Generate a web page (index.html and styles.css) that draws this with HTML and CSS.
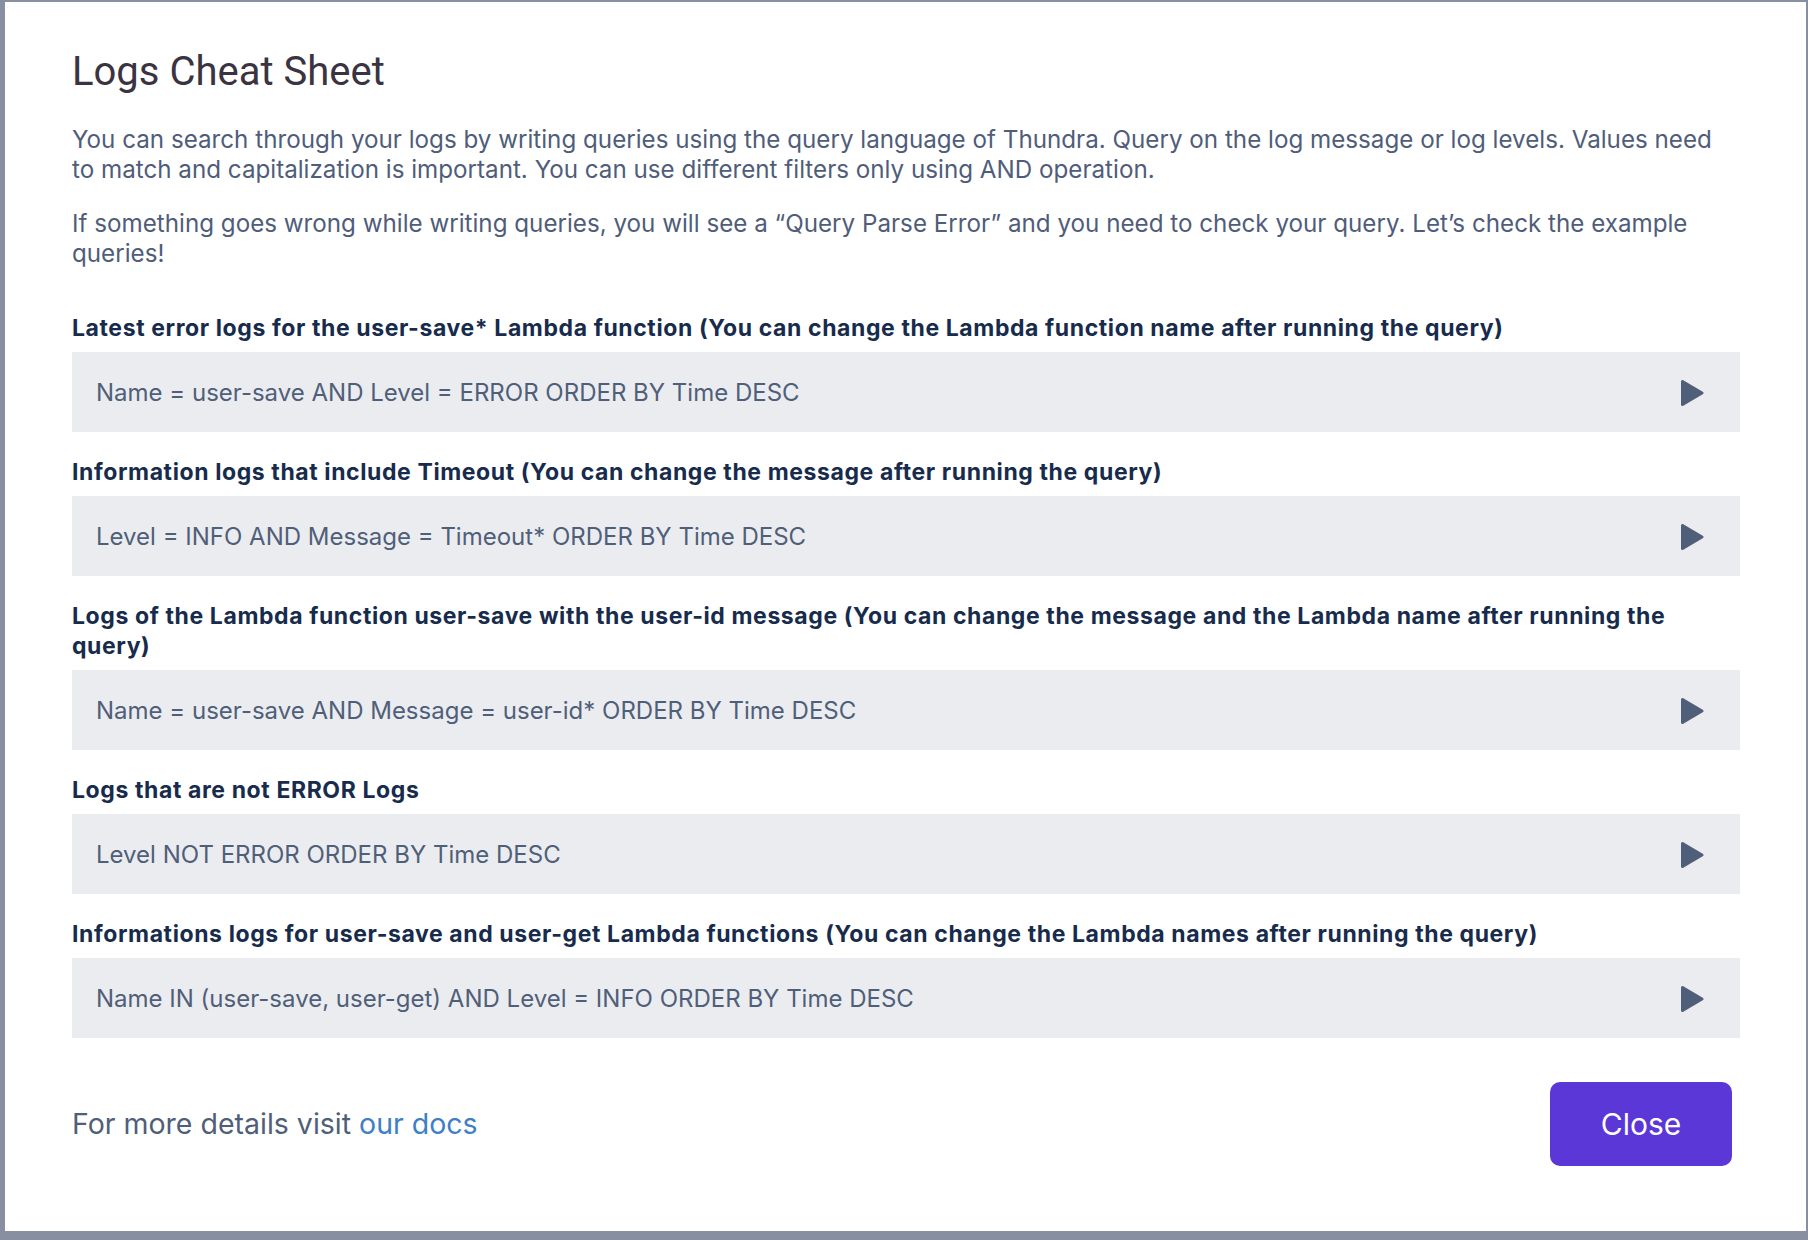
FILE: index.html
```html
<!DOCTYPE html>
<html lang="en">
<head>
<meta charset="utf-8">
<title>Logs Cheat Sheet</title>
<link rel="stylesheet" href="styles.css">
</head>
<body>
<div class="modal">
  <h1 class="title">Logs Cheat Sheet</h1>
  <div class="intro">
    <p>You can search through your logs by writing queries using the query language of Thundra. Query on the log message or log levels. Values need to match and capitalization is important. You can use different filters only using AND operation.</p>
    <p>If something goes wrong while writing queries, you will see a “Query Parse Error” and you need to check your query. Let’s check the example queries!</p>
  </div>
  <div class="items">
    <div class="item">
      <div class="label">Latest error logs for the user-save* Lambda function (You can change the Lambda function name after running the query)</div>
      <div class="query"><span class="qtext">Name = user-save AND Level = ERROR ORDER BY Time DESC</span><svg class="play" width="24" height="28" viewBox="0 0 24 28"><polygon points="2.5,2.5 2.5,25.5 22,14" fill="#505f79" stroke="#505f79" stroke-width="3" stroke-linejoin="round"/></svg></div>
    </div>
    <div class="item">
      <div class="label">Information logs that include Timeout (You can change the message after running the query)</div>
      <div class="query"><span class="qtext">Level = INFO AND Message = Timeout* ORDER BY Time DESC</span><svg class="play" width="24" height="28" viewBox="0 0 24 28"><polygon points="2.5,2.5 2.5,25.5 22,14" fill="#505f79" stroke="#505f79" stroke-width="3" stroke-linejoin="round"/></svg></div>
    </div>
    <div class="item">
      <div class="label">Logs of the Lambda function user-save with the user-id message (You can change the message and the Lambda name after running the query)</div>
      <div class="query"><span class="qtext">Name = user-save AND Message = user-id* ORDER BY Time DESC</span><svg class="play" width="24" height="28" viewBox="0 0 24 28"><polygon points="2.5,2.5 2.5,25.5 22,14" fill="#505f79" stroke="#505f79" stroke-width="3" stroke-linejoin="round"/></svg></div>
    </div>
    <div class="item">
      <div class="label">Logs that are not ERROR Logs</div>
      <div class="query"><span class="qtext">Level NOT ERROR ORDER BY Time DESC</span><svg class="play" width="24" height="28" viewBox="0 0 24 28"><polygon points="2.5,2.5 2.5,25.5 22,14" fill="#505f79" stroke="#505f79" stroke-width="3" stroke-linejoin="round"/></svg></div>
    </div>
    <div class="item">
      <div class="label">Informations logs for user-save and user-get Lambda functions (You can change the Lambda names after running the query)</div>
      <div class="query"><span class="qtext">Name IN (user-save, user-get) AND Level = INFO ORDER BY Time DESC</span><svg class="play" width="24" height="28" viewBox="0 0 24 28"><polygon points="2.5,2.5 2.5,25.5 22,14" fill="#505f79" stroke="#505f79" stroke-width="3" stroke-linejoin="round"/></svg></div>
    </div>
  </div>
  <div class="footer">
    <div class="more">For more details visit <a class="docs" href="#">our docs</a></div>
    <button class="close" type="button">Close</button>
  </div>
</div>
</body>
</html>
```
FILE: styles.css
```css
html, body {
  margin: 0;
  padding: 0;
}
body {
  background: #878fa0;
  width: 1808px;
  height: 1240px;
  overflow: hidden;
  font-family: Inter, "Noto Sans", sans-serif;
}
.modal {
  box-sizing: border-box;
  margin: 2px 2px 0 5px;
  width: 1801px;
  height: 1229px;
  background: #ffffff;
  padding: 46px 66px 0 67px;
  display: flex;
  flex-direction: column;
}
.title {
  margin: 0;
  font-family: Roboto, "Liberation Sans", sans-serif;
  font-weight: 400;
  font-size: 40px;
  line-height: 48px;
  color: #3a3442;
}
.intro {
  margin-top: 29px;
  padding-right: 20px;
}
.intro p {
  margin: 0 0 24px 0;
  font-size: 24.2px;
  line-height: 30px;
  color: #4f5d7a;
}
.intro p:last-child {
  margin-bottom: 0;
}
.items {
  margin-top: 44px;
  display: flex;
  flex-direction: column;
  gap: 25px;
}
.label {
  font-size: 23px;
  font-weight: 700;
  letter-spacing: 0.6px;
  line-height: 30px;
  color: #172b4d;
  margin-bottom: 9px;
}
.query {
  box-sizing: border-box;
  height: 80px;
  background: #ebecf0;
  display: flex;
  align-items: center;
  justify-content: space-between;
  padding: 2px 36px 0 24px;
}
.qtext {
  font-size: 24px;
  line-height: 30px;
  color: #505f79;
}
.play {
  display: block;
  flex: none;
}
.footer {
  margin-top: 44px;
  display: flex;
  align-items: center;
  justify-content: space-between;
  padding-right: 8px;
}
.more {
  font-size: 28.5px;
  line-height: 34px;
  color: #505f79;
}
.docs {
  color: #3d80c6;
  text-decoration: none;
}
.close {
  width: 182px;
  height: 84px;
  border: none;
  border-radius: 10px;
  background: #5b37d7;
  color: #ffffff;
  font-family: Inter, "Noto Sans", sans-serif;
  font-size: 30px;
  padding: 0;
}
```
